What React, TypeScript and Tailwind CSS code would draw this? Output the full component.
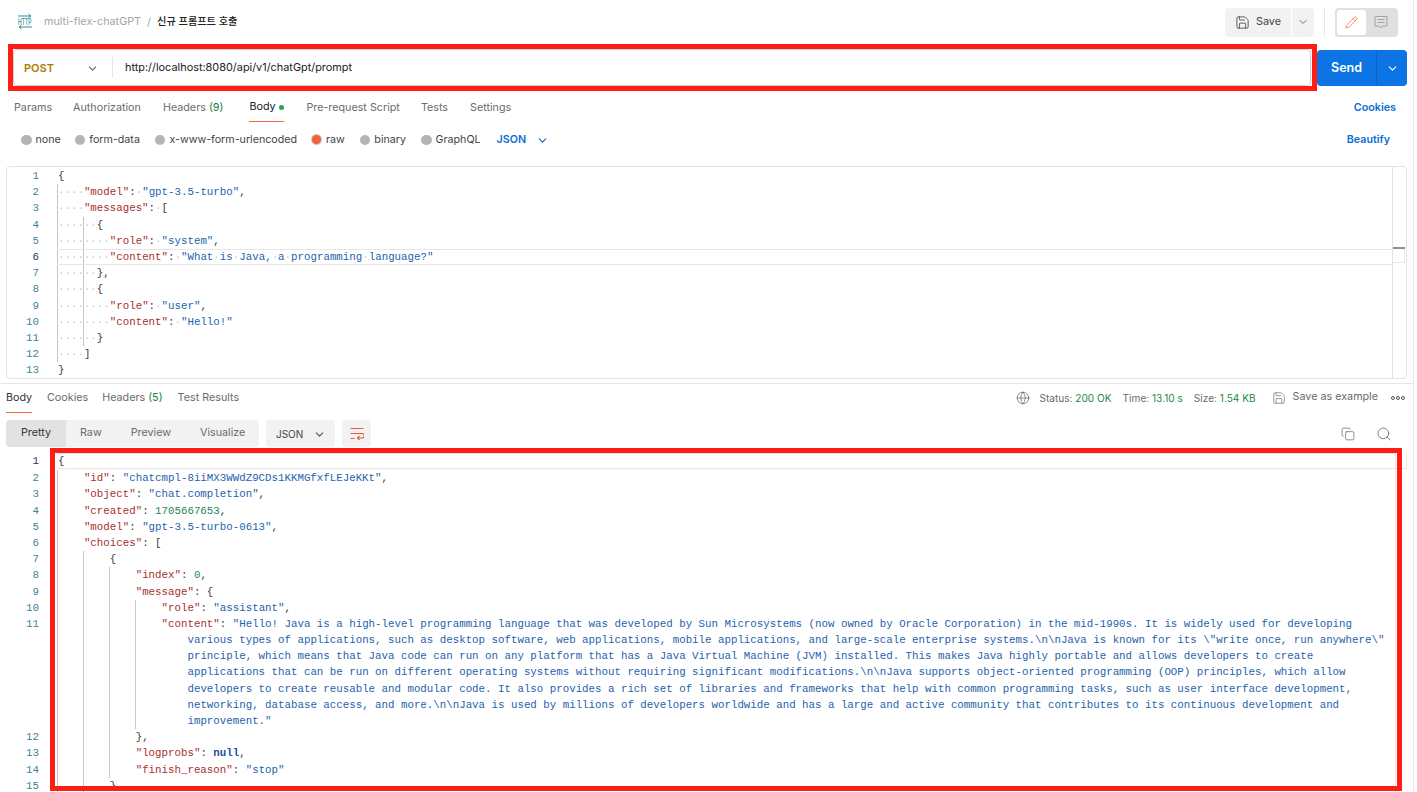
import React from "react";
import { ChevronDown, Save, Pencil, Globe, Copy, Search } from "lucide-react";

const Key = ({ children }: { children: React.ReactNode }) => <span className="text-[#a82f2f]">{children}</span>;
const Str = ({ children }: { children: React.ReactNode }) => <span className="text-[#2562ac]">{children}</span>;
const Num = ({ children }: { children: React.ReactNode }) => <span className="text-[#18865c]">{children}</span>;
const Dot = ({ n = 1 }: { n?: number }) => <span className="text-[#c9c9c9]">{"·".repeat(n)}</span>;

const Guide = ({ dots = true, len = 4 }: { dots?: boolean; len?: number }) => (
  <span className="-ml-px border-l border-[#c6c6c6]">{dots ? <Dot n={len} /> : " ".repeat(len)}</span>
);

function Row({ n, guides = 0, dots = false, extra = 0, short = false, active = false, hl = false, children, gutter }: {
  n?: number; guides?: number; dots?: boolean; extra?: number; short?: boolean; active?: boolean; hl?: boolean; children?: React.ReactNode; gutter: string;
}) {
  return (
    <div className="flex h-[16.2px] leading-[16.2px] whitespace-pre">
      <span className={gutter + " shrink-0 text-right " + (active ? "text-[#27386b]" : "text-[#3f8299]")}>{n ?? ""}</span>
      <span className={"flex-1 flex items-stretch " + (hl ? "border-y border-[#e6e6e6] leading-[14.2px]" : "")}>
        {Array.from({ length: guides }).map((_, i) => <Guide key={i} dots={dots} len={short && i === guides - 1 ? 2 : 4} />)}
        {extra > 0 && <span>{" ".repeat(extra)}</span>}
        <span className="text-[#3a3a3a]">{children}</span>
      </span>
    </div>
  );
}

const ReqRow = (p: any) => <Row {...p} dots gutter="w-[32px] mr-[19px]" />;
const ResRow = (p: any) => <Row {...p} gutter="w-[39px] mr-[19px]" />;

function HttpIcon() {
  return (
    <svg width="16" height="17" viewBox="0 0 16 17" fill="none" stroke="#2f8a9c" strokeWidth="1" className="-mt-[1px]">
      <path d="M1 3h13M11.5 1l2.5 2-2.5 2" />
      <path d="M15 14H2M4.5 12L2 14l2.5 2" />
      <text transform="translate(1 11.8) scale(0.58 1)" fontSize="8.6" fontWeight="500" fill="#2f8a9c" stroke="none" fontFamily="Inter, sans-serif">HTTP</text>
    </svg>
  );
}

function WrapIcon() {
  return (
    <svg width="14" height="13" viewBox="0 0 14 13" fill="none" stroke="#e2603a" strokeWidth="1.1">
      <path d="M0.5 1.5h13M0.5 6.5h11.5a1.7 1.7 0 0 1 0 4.5H7.5M9.5 9l-2 2 2 2M0.5 11.5h4" />
    </svg>
  );
}

function CommentIcon() {
  return (
    <svg width="14" height="15" viewBox="0 0 14 15" fill="none" stroke="#a3a3a3" strokeWidth="1">
      <path d="M1 1.5h12v9.5H8.5L7 13l-1.5-2H1zM3.5 4.5h7M3.5 7.5h7" />
    </svg>
  );
}

const Radio = ({ label, on }: { label: string; on?: boolean }) => (
  <span className="flex items-center gap-[4px]">
    {on ? (
      <span className="size-[9px] mx-px rounded-full bg-[#f2613a] ring-1 ring-[#c9c9c9]" />
    ) : (
      <span className="size-[10.5px] rounded-full bg-[#b5b5b5]" />
    )}
    <span>{label}</span>
  </span>
);

export default function App() {
  return (
    <div className="relative w-[1417px] h-[792px] overflow-hidden bg-white [font-family:Inter,'Noto_Sans_CJK_KR',sans-serif] text-[11px] text-[#6b6b6b]">
      <div className="w-[1414px] h-full border-r border-[#e6e6e6] flex flex-col">
        {/* header */}
        <div className="h-[44px] flex items-center pl-[17px] pr-[15px] shrink-0">
          <HttpIcon />
          <span className="ml-[11px] text-[#a6a6a6] text-[10.8px]">multi-flex-chatGPT</span>
          <span className="mx-[6px] text-[#a6a6a6]">/</span>
          <span className="text-[#222] text-[10.2px] font-medium">신규 프롬프트 호출</span>
          <div className="ml-auto flex items-center h-[29px] gap-px">
            <span className="w-[66px] h-full bg-[#f2f2f2] rounded-l-[4px] flex items-center pl-[10px] gap-[6px] text-[#444] text-[10.8px]">
              <Save size={15} strokeWidth={1.2} color="#333" />Save
            </span>
            <span className="w-[22px] h-full bg-[#f2f2f2] rounded-r-[4px] flex items-center justify-center">
              <ChevronDown size={12} color="#777" />
            </span>
          </div>
          <span className="w-px h-[29px] bg-[#e6e6e6] mx-[10px]" />
          <div className="w-[63px] h-[29px] rounded-[4px] bg-[#e0e0e0] p-[2px] flex items-center">
            <span className="w-[29px] h-[25px] bg-white rounded-[3px] flex items-center justify-center">
              <Pencil size={13} color="#e8613a" strokeWidth={1.3} />
            </span>
            <span className="flex-1 flex items-center justify-center"><CommentIcon /></span>
          </div>
        </div>

        {/* url row */}
        <div className="flex h-[37px] ml-[13px] shrink-0 mt-[5px]">
          <div className="w-[1298px] h-full border border-[#d4d4d4] rounded-[4px] flex items-center">
            <span className="ml-[10px] w-[62px] text-[#ad7a03] font-semibold text-[11px] pt-px">POST</span>
            <ChevronDown size={13} color="#666" className="mt-px" />
            <span className="ml-[13px] w-px h-[21px] bg-[#e6e6e6]" />
            <span className="ml-[12px] text-[#212121] text-[10.9px]">http://localhost:8080/api/v1/chatGpt/prompt</span>
          </div>
          <div className="ml-[6px] mt-px w-[90px] h-[36px] bg-[#0c74e4] rounded-[4px] flex items-center text-white">
            <span className="w-[60px] text-center text-[12.5px] font-semibold border-r border-[#0a63c4] leading-[36px]">Send</span>
            <span className="flex-1 flex items-center justify-center"><ChevronDown size={13} /></span>
          </div>
        </div>

        {/* request tabs */}
        <div className="h-[36px] pt-[8px] flex items-center pl-[14px] pr-[17px] shrink-0 text-[10.75px]">
          <span>Params</span>
          <span className="ml-[21px]">Authorization</span>
          <span className="ml-[22px]">Headers <span className="text-[#16803c]">(9)</span></span>
          <span className="ml-[26px] h-full flex items-center border-b border-[#f26b3a] text-[#222] gap-[3px] w-[35px]">Body<span className="size-[5px] rounded-full bg-[#22a55b]" /></span>
          <span className="ml-[22px]">Pre-request Script</span>
          <span className="ml-[21px]">Tests</span>
          <span className="ml-[22px]">Settings</span>
          <span className="ml-auto text-[#0c6ed1] font-semibold">Cookies</span>
        </div>

        {/* radios */}
        <div className="h-[36px] flex items-center pl-[21px] pr-[23px] shrink-0 text-[10.7px] text-[#444]">
          <Radio label="none" />
          <span className="ml-[14px]"><Radio label="form-data" /></span>
          <span className="ml-[15px]"><Radio label="x-www-form-urlencoded" /></span>
          <span className="ml-[14px]"><Radio label="raw" on /></span>
          <span className="ml-[15px]"><Radio label="binary" /></span>
          <span className="ml-[15px]"><Radio label="GraphQL" /></span>
          <span className="ml-[16px] text-[#0c6ed1] font-semibold">JSON</span>
          <ChevronDown size={13} className="ml-[10px]" color="#0c6ed1" />
          <span className="ml-auto text-[#0c6ed1] font-semibold">Beautify</span>
        </div>

        {/* request editor */}
        <div className="mt-[8px] ml-[6px] w-[1401px] h-[213px] shrink-0 border border-[#e3e3e3] rounded-[4px] flex overflow-hidden [font-family:'Liberation_Mono',monospace] text-[10.79px]">
          <div className="flex-1 min-w-0 pt-px">
            <ReqRow n={1}>{"{"}</ReqRow>
            <ReqRow n={2} guides={1}><Key>"model"</Key>:<Dot /><Str>"gpt-3.5-turbo"</Str>,</ReqRow>
            <ReqRow n={3} guides={1}><Key>"messages"</Key>:<Dot />[</ReqRow>
            <ReqRow n={4} guides={2} short>{"{"}</ReqRow>
            <ReqRow n={5} guides={2}><Key>"role"</Key>:<Dot /><Str>"system"</Str>,</ReqRow>
            <ReqRow n={6} guides={2} active hl><Key>"content"</Key>:<Dot /><Str>"What<Dot />is<Dot />Java,<Dot />a<Dot />programming<Dot />language?"</Str></ReqRow>
            <ReqRow n={7} guides={2} short>{"},"}</ReqRow>
            <ReqRow n={8} guides={2} short>{"{"}</ReqRow>
            <ReqRow n={9} guides={2}><Key>"role"</Key>:<Dot /><Str>"user"</Str>,</ReqRow>
            <ReqRow n={10} guides={2}><Key>"content"</Key>:<Dot /><Str>"Hello!"</Str></ReqRow>
            <ReqRow n={11} guides={2} short>{"}"}</ReqRow>
            <ReqRow n={12} guides={1}>]</ReqRow>
            <ReqRow n={13}>{"}"}</ReqRow>
          </div>
          <div className="w-[14px] shrink-0 border-l border-[#e3e3e3] pt-[80px]">
            <div className="w-[12px] h-[2px] bg-[#8f8f8f]" />
            <div className="w-[12px] h-[14px] border-b border-r border-[#e6e6e6]" />
          </div>
        </div>

        <div className="mt-[4px] h-px bg-[#e6e6e6] shrink-0" />

        {/* response tabs */}
        <div className="h-[29px] flex items-center pl-[6px] pr-[8px] shrink-0 text-[10.75px]">
          <span className="h-full flex items-center border-b border-[#f26b3a] text-[#333] w-[26px]">Body</span>
          <span className="ml-[15px]">Cookies</span>
          <span className="ml-[14px]">Headers <span className="text-[#16803c]">(5)</span></span>
          <span className="ml-[15px]">Test Results</span>
          <div className="ml-auto flex items-center">
            <Globe size={14} strokeWidth={1.1} color="#555" />
            <span className="ml-[10px] text-[10.1px]">Status: <span className="text-[#1f8a4c]">200 OK</span></span>
            <span className="ml-[11px] text-[10.1px]">Time: <span className="text-[#1f8a4c]">13.10 s</span></span>
            <span className="ml-[11px] text-[10.1px]">Size: <span className="text-[#1f8a4c]">1.54 KB</span></span>
            <Save size={14} strokeWidth={1.1} color="#666" className="ml-[16px]" />
            <span className="ml-[7px] -mt-[2px]">Save as example</span>
            <span className="ml-[13px] flex gap-[1px]">
              <span className="size-[4px] rounded-full border border-[#555]" />
              <span className="size-[4px] rounded-full border border-[#555]" />
              <span className="size-[4px] rounded-full border border-[#555]" />
            </span>
          </div>
        </div>

        {/* response toolbar */}
        <div className="mt-[7px] h-[27px] ml-[6px] mr-[21px] flex items-center shrink-0 text-[10.75px]">
          <div className="w-[253px] h-full bg-[#f2f2f2] rounded-[4px] flex items-stretch overflow-hidden">
            <span className="w-[60px] bg-[#e2e2e2] text-[#333] flex items-center justify-center pb-px">Pretty</span>
            <span className="ml-[14px] flex items-center pb-px">Raw</span>
            <span className="ml-[29px] flex items-center pb-px">Preview</span>
            <span className="ml-[29px] flex items-center pb-px">Visualize</span>
          </div>
          <div className="ml-[7px] w-[69px] h-full bg-[#f2f2f2] rounded-[4px] flex items-center pl-[10px] gap-[10px] text-[#444] text-[10px] pt-px">
            JSON<ChevronDown size={13} color="#555" />
          </div>
          <div className="ml-[7px] w-[29px] h-full bg-[#f2f2f2] rounded-[4px] flex items-center justify-center"><WrapIcon /></div>
          <Copy size={14} strokeWidth={1.1} color="#555" className="ml-auto" />
          <Search size={16} strokeWidth={1.1} color="#555" className="ml-[21px]" />
        </div>

        {/* response editor */}
        <div className="mt-[6px] flex-1 min-h-0 overflow-hidden flex pr-[6px] [font-family:'Liberation_Mono',monospace] text-[10.79px]">
          <div className="flex-1 min-w-0">
            <ResRow n={1} active hl>{"{"}</ResRow>
            <div className="mt-px">
              <ResRow n={2} guides={1}><Key>"id"</Key>: <Str>"chatcmpl-8iiMX3WWdZ9CDs1KKMGfxfLEJeKKt"</Str>,</ResRow>
              <ResRow n={3} guides={1}><Key>"object"</Key>: <Str>"chat.completion"</Str>,</ResRow>
              <ResRow n={4} guides={1}><Key>"created"</Key>: <Num>1705667653</Num>,</ResRow>
              <ResRow n={5} guides={1}><Key>"model"</Key>: <Str>"gpt-3.5-turbo-0613"</Str>,</ResRow>
              <ResRow n={6} guides={1}><Key>"choices"</Key>: [</ResRow>
              <ResRow n={7} guides={2}>{"{"}</ResRow>
              <ResRow n={8} guides={3}><Key>"index"</Key>: <Num>0</Num>,</ResRow>
              <ResRow n={9} guides={3}><Key>"message"</Key>: {"{"}</ResRow>
              <ResRow n={10} guides={4}><Key>"role"</Key>: <Str>"assistant"</Str>,</ResRow>
              <ResRow n={11} guides={4}><Key>"content"</Key>: <Str>"Hello! Java is a high-level programming language that was developed by Sun Microsystems (now owned by Oracle Corporation) in the mid-1990s. It is widely used for developing</Str></ResRow>
              <ResRow guides={4} extra={4}><Str>{"various types of applications, such as desktop software, web applications, mobile applications, and large-scale enterprise systems.\\n\\nJava is known for its \\\"write once, run anywhere\\\""}</Str></ResRow>
              <ResRow guides={4} extra={4}><Str>principle, which means that Java code can run on any platform that has a Java Virtual Machine (JVM) installed. This makes Java highly portable and allows developers to create</Str></ResRow>
              <ResRow guides={4} extra={4}><Str>{"applications that can be run on different operating systems without requiring significant modifications.\\n\\nJava supports object-oriented programming (OOP) principles, which allow"}</Str></ResRow>
              <ResRow guides={4} extra={4}><Str>developers to create reusable and modular code. It also provides a rich set of libraries and frameworks that help with common programming tasks, such as user interface development,</Str></ResRow>
              <ResRow guides={4} extra={4}><Str>{"networking, database access, and more.\\n\\nJava is used by millions of developers worldwide and has a large and active community that contributes to its continuous development and"}</Str></ResRow>
              <ResRow guides={4} extra={4}><Str>improvement."</Str></ResRow>
              <ResRow n={12} guides={3}>{"},"}</ResRow>
              <ResRow n={13} guides={3}><Key>"logprobs"</Key>: <span className="font-bold text-[#1c4f9c]">null</span>,</ResRow>
              <ResRow n={14} guides={3}><Key>"finish_reason"</Key>: <Str>"stop"</Str></ResRow>
              <ResRow n={15} guides={2}>{"},"}</ResRow>
            </div>
          </div>
          <div className="w-[12px] shrink-0 border-l border-[#e3e3e3]">
            <div className="h-[16px] border-b border-r border-[#e6e6e6]" />
          </div>
        </div>
      </div>

      {/* red annotation frames drawn over the screenshot */}
      <div className="absolute left-[8px] top-[44px] w-[1309px] h-[47px] border-[5px] border-[#ff1e14]" />
      <div className="absolute left-[50px] top-[448px] w-[1352px] h-[343px] border-[5px] border-[#ff1e14]" />
    </div>
  );
}
